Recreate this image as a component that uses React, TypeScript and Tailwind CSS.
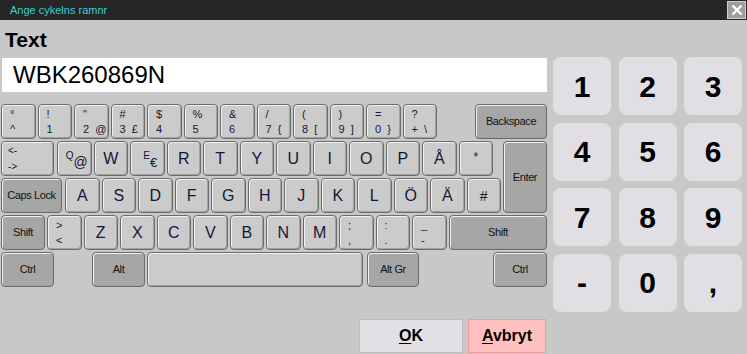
import React from 'react';

type KeyProps = {
  w?: string;
  h?: string;
  dark?: boolean;
  className?: string;
  children?: React.ReactNode;
};

const Key: React.FC<KeyProps> = ({ w = 'w-[34.5px]', h = 'h-[35px]', dark, className = '', children }) => (
  <div
    className={`${w} ${h} ${className} shrink-0 flex items-center justify-center rounded-[4px] border border-[#6c6c6c] shadow-[inset_1px_1px_0_#f0f0f0,inset_-1px_-1px_0_#a2a2a2] text-[#16163a] ${
      dark ? 'bg-[#a6a6a6]' : 'bg-[#cbcbcb]'
    }`}
  >
    {children}
  </div>
);

const Two: React.FC<{ top: string; bottom: string }> = ({ top, bottom }) => (
  <div className="w-full h-full flex flex-col justify-center pl-[8px] text-[11px] leading-[14px] gap-[1px]">
    <span className="whitespace-pre">{top}</span>
    <span className="whitespace-pre">{bottom}</span>
  </div>
);

const Mod: React.FC<{ children: React.ReactNode }> = ({ children }) => (
  <span className="text-[11px] tracking-[-0.4px] text-[#111]">{children}</span>
);

const Letter: React.FC<{ children: React.ReactNode }> = ({ children }) => (
  <span className="text-[16px] leading-none">{children}</span>
);

const numRow: [string, string][] = [
  ['°', '^'],
  ['!', '1'],
  ['"', '2  @'],
  ['#', '3  £'],
  ['$', '4'],
  ['%', '5'],
  ['&', '6'],
  ['/', '7  {'],
  ['(', '8  ['],
  [')', '9  ]'],
  ['=', '0  }'],
  ['?', '+  \\'],
];

const row2 = ['R', 'T', 'Y', 'U', 'I', 'O', 'P', 'Å'];
const row3 = ['A', 'S', 'D', 'F', 'G', 'H', 'J', 'K', 'L', 'Ö', 'Ä', '#'];
const row4 = ['Z', 'X', 'C', 'V', 'B', 'N', 'M'];
const pad = ['1', '2', '3', '4', '5', '6', '7', '8', '9', '-', '0', ','];

const App: React.FC = () => {
  return (
    <div className="w-[747px] h-[354px] overflow-hidden bg-[#c8c8c8] font-['Liberation_Sans',Arial,sans-serif]">
      {/* title bar */}
      <div className="h-[20px] bg-[#262626] flex items-center justify-between pl-[10px] pr-[1px]">
        <span className="text-[11px] text-[#3dd0d0]">Ange cykelns ramnr</span>
        <div className="w-[19px] h-[18px] bg-[#9e9e9e] border border-[#cfcfcf] flex items-center justify-center">
          <svg width="12" height="12" viewBox="0 0 12 12">
            <path d="M1.5 1.5 L10.5 10.5 M10.5 1.5 L1.5 10.5" stroke="#fff" strokeWidth="2.4" />
          </svg>
        </div>
      </div>

      <div className="flex">
        {/* left side */}
        <div className="w-[548px] pl-[1px] flex flex-col">
          <div className="mt-[7px] h-[26px] leading-[26px] pl-[4px] text-[21px] font-bold text-black">Text</div>
          <div className="mt-[5px] ml-[1px] w-[545px] h-[34px] bg-white pl-[11px] flex items-center text-[24px] text-black">
            WBK260869N
          </div>

          <div className="mt-[12px] pr-[1px] flex flex-col gap-[2px]">
            {/* row 1 */}
            <div className="flex gap-[2px]">
              {numRow.map(([t, b]) => (
                <Key key={t}>
                  <Two top={t} bottom={b} />
                </Key>
              ))}
              <Key w="w-[72px]" dark className="ml-auto">
                <Mod>Backspace</Mod>
              </Key>
            </div>

            {/* rows 2 and 3 with enter */}
            <div className="flex">
              <div className="flex flex-col gap-[2px]">
                <div className="flex gap-[2px]">
                  <Key w="w-[53px]" className="mr-[1px]">
                    <div className="w-full h-full flex flex-col justify-center pl-[6px] text-[10px] leading-[14px] gap-[2px]">
                      <span>&lt;-</span>
                      <span>-&gt;</span>
                    </div>
                  </Key>
                  <Key>
                    <div className="flex items-center pl-[5px]">
                      <span className="text-[10px] -translate-y-[3px]">Q</span>
                      <span className="text-[14px] translate-y-[4px]">@</span>
                    </div>
                  </Key>
                  <Key>
                    <Letter>W</Letter>
                  </Key>
                  <Key>
                    <div className="flex items-center pl-[6px]">
                      <span className="text-[10px] -translate-y-[3px]">E</span>
                      <span className="text-[13px] translate-y-[4px]">€</span>
                    </div>
                  </Key>
                  {row2.map((l) => (
                    <Key key={l}>
                      <Letter>{l}</Letter>
                    </Key>
                  ))}
                  <Key>
                    <span className="text-[12px] -translate-y-[2px]">*</span>
                  </Key>
                </div>
                <div className="flex gap-[2px]">
                  <Key w="w-[61px]" dark className="mr-[1px]">
                    <Mod>Caps Lock</Mod>
                  </Key>
                  {row3.map((l) => (
                    <Key key={l}>
                      <Letter>{l === '#' ? <span className="text-[14px]">#</span> : l}</Letter>
                    </Key>
                  ))}
                </div>
              </div>
              <Key w="w-[44px]" h="h-[72px]" dark className="ml-auto">
                <Mod>Enter</Mod>
              </Key>
            </div>

            {/* row 4 */}
            <div className="flex gap-[2px]">
              <Key w="w-[44px]" dark>
                <Mod>Shift</Mod>
              </Key>
              <Key>
                <Two top=">" bottom="<" />
              </Key>
              {row4.map((l) => (
                <Key key={l}>
                  <Letter>{l}</Letter>
                </Key>
              ))}
              <Key>
                <Two top=";" bottom="," />
              </Key>
              <Key>
                <Two top=":" bottom="." />
              </Key>
              <Key>
                <Two top="_" bottom="-" />
              </Key>
              <Key w="w-[98px]" dark className="ml-auto">
                <Mod>Shift</Mod>
              </Key>
            </div>

            {/* row 5 */}
            <div className="flex">
              <Key w="w-[53px]" dark>
                <Mod>Ctrl</Mod>
              </Key>
              <Key w="w-[53px]" dark className="ml-[38px]">
                <Mod>Alt</Mod>
              </Key>
              <Key w="w-[216px]" className="ml-[2px]" />
              <Key w="w-[52px]" dark className="ml-[4px]">
                <Mod>Alt Gr</Mod>
              </Key>
              <Key w="w-[54px]" dark className="ml-auto">
                <Mod>Ctrl</Mod>
              </Key>
            </div>
          </div>

          {/* buttons */}
          <div className="mt-[32px] pr-[2px] flex justify-end gap-[5px]">
            <button className="w-[104px] h-[34px] bg-[#e2e0e5] border border-[#bdbdbd] text-[16px] font-bold text-black">
              <span className="underline underline-offset-[2px]">O</span>K
            </button>
            <button className="w-[78px] h-[34px] bg-[#ffc0c0] border border-[#f59a9a] text-[16px] font-bold text-black">
              <span className="underline underline-offset-[2px]">A</span>vbryt
            </button>
          </div>
        </div>

        {/* numpad */}
        <div className="ml-[5px] mt-[37px] grid grid-cols-[58px_58px_58px] gap-x-[7.5px] gap-y-[7.5px] self-start">
          {pad.map((d) => (
            <div
              key={d}
              className="w-[58px] h-[58px] rounded-[8px] bg-[#e1dfe4] flex items-center justify-center text-[30px] font-bold text-black"
            >
              {d}
            </div>
          ))}
        </div>
      </div>
    </div>
  );
};

export default App;
